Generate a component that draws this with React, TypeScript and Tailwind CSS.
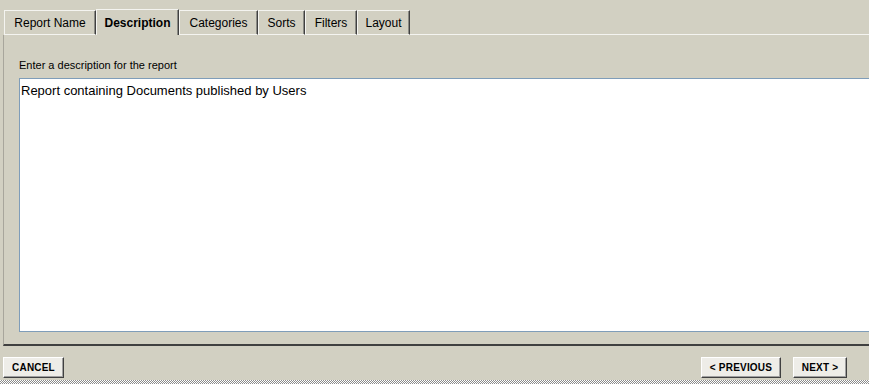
const tabs = [
  { label: "Report Name", w: "w-[92px]" },
  { label: "Description", w: "w-[83px]", active: true },
  { label: "Categories", w: "w-[79px]" },
  { label: "Sorts", w: "w-[47px]" },
  { label: "Filters", w: "w-[52px]" },
  { label: "Layout", w: "w-[53px]" },
];

function Btn({ label, w }: { label: string; w: string }) {
  return (
    <button
      className={`${w} h-[21px] flex items-center justify-center bg-[#eeede8] border border-t-white border-l-white border-r-[#404040] border-b-[#404040] shadow-[inset_-1px_-1px_0_#a0a0a0] text-[10px] font-bold text-black tracking-[0.2px]`}
    >
      {label}
    </button>
  );
}

export default function App() {
  return (
    <div
      className="w-[869px] h-[384px] overflow-hidden bg-[#d2d0c2] flex flex-col text-black"
      style={{ fontFamily: '"Liberation Sans", Arial, sans-serif' }}
    >
      {/* tab strip */}
      <div className="flex items-end pt-[10px] pl-[4px] h-[35px]">
        {tabs.map((t) => (
          <div
            key={t.label}
            className={`${t.w} h-[25px] flex items-center justify-center text-[12px] border-t border-l border-t-[#f4f4f0] border-l-[#f4f4f0] border-r border-r-[#404040] shadow-[inset_-1px_0_0_#8a8a84] ${
              t.active ? "font-bold border-b-0 h-[26px]" : "border-b border-b-[#f4f4f0]"
            }`}
          >
            {t.label}
          </div>
        ))}
        <div className="flex-1 border-b border-b-[#f4f4f0]" />
      </div>

      {/* panel */}
      <div className="ml-[3px] w-[900px] h-[311px] border-l border-l-[#a8a69c] border-b-2 border-b-[#404040] flex flex-col pt-[24px] pl-[15px]">
        <div className="text-[11px] leading-[13px] mb-[6px]">
          Enter a description for the report
        </div>
        <textarea
          readOnly
          defaultValue="Report containing Documents published by Users"
          className="w-[880px] h-[254px] bg-white border border-[#7f9db9] resize-none outline-none px-[1px] pt-[4px] text-[13px] leading-[16px]"
          style={{ fontFamily: '"Liberation Sans", Arial, sans-serif' }}
        />
      </div>

      {/* footer */}
      <div className="flex items-start pt-[11px] px-[3px] h-[34px]">
        <Btn label="CANCEL" w="w-[61px]" />
        <div className="flex-1" />
        <div className="flex gap-[12px] mr-[19px]">
          <Btn label="< PREVIOUS" w="w-[80px]" />
          <Btn label="NEXT >" w="w-[54px]" />
        </div>
      </div>
      <div className="flex-1 bg-[repeating-conic-gradient(#8c8c8c_0_25%,#ffffff_0_50%)] bg-[length:2px_2px]" />
    </div>
  );
}
